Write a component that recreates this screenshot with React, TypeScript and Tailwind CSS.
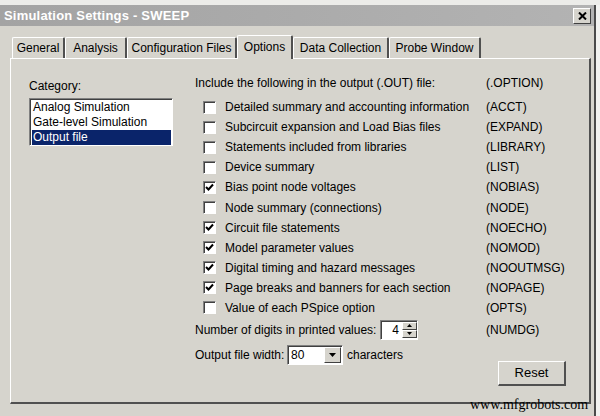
import React from "react";

const options = [
  { label: "Detailed summary and accounting information", code: "(ACCT)", checked: false },
  { label: "Subcircuit expansion and Load Bias files", code: "(EXPAND)", checked: false },
  { label: "Statements included from libraries", code: "(LIBRARY)", checked: false },
  { label: "Device summary", code: "(LIST)", checked: false },
  { label: "Bias point node voltages", code: "(NOBIAS)", checked: true },
  { label: "Node summary (connections)", code: "(NODE)", checked: false },
  { label: "Circuit file statements", code: "(NOECHO)", checked: true },
  { label: "Model parameter values", code: "(NOMOD)", checked: true },
  { label: "Digital timing and hazard messages", code: "(NOOUTMSG)", checked: true },
  { label: "Page breaks and banners for each section", code: "(NOPAGE)", checked: true },
  { label: "Value of each PSpice option", code: "(OPTS)", checked: false },
];

const tabs = [
  { name: "General", w: "w-[53px]" },
  { name: "Analysis", w: "w-[62px]" },
  { name: "Configuration Files", w: "w-[110px]" },
  { name: "Options", w: "w-[56px]", active: true },
  { name: "Data Collection", w: "w-[96px]" },
  { name: "Probe Window", w: "w-[92px]" },
];

function Checkbox({ checked }: { checked: boolean }) {
  return (
    <div className="w-[13px] h-[13px] bg-white border-t border-l border-t-[#808080] border-l-[#808080] border-b border-r border-b-white border-r-white shadow-[inset_1px_1px_0_#404040] flex items-center justify-center">
      {checked && (
        <svg width="9" height="9" viewBox="0 0 9 9">
          <path d="M1 4 L3.5 6.5 L8 1.5" fill="none" stroke="black" strokeWidth="2" />
        </svg>
      )}
    </div>
  );
}

function Sunken({ className, children }: { className?: string; children?: React.ReactNode }) {
  return (
    <div className={"bg-white border-t border-l border-t-[#808080] border-l-[#808080] border-b border-r border-b-white border-r-white shadow-[inset_1px_1px_0_#404040] " + (className ?? "")}>
      {children}
    </div>
  );
}

function Arrow({ up, size = 3 }: { up?: boolean; size?: number }) {
  return (
    <svg width={size * 2 + 1} height={size + 1} viewBox={`0 0 ${size * 2 + 1} ${size + 1}`}>
      {up ? (
        <polygon points={`0,${size + 1} ${size * 2 + 1},${size + 1} ${size + 0.5},0`} fill="black" />
      ) : (
        <polygon points={`0,0 ${size * 2 + 1},0 ${size + 0.5},${size + 1}`} fill="black" />
      )}
    </svg>
  );
}

export default function App() {
  return (
    <div
      className="w-[600px] h-[416px] bg-[#ecece9] overflow-hidden relative text-[12px] text-black"
      style={{ fontFamily: '"Liberation Sans", Arial, sans-serif' }}
    >
      <div className="h-[5px]" />
      <div className="flex h-[411px]">
        <div className="flex-1 flex flex-col bg-[#d6d4cd]">
          {/* title bar */}
          <div className="h-[21px] bg-gradient-to-r from-[#a3a3a3] to-[#b3b3b3] flex items-center justify-between pl-[4px] pr-[3px]">
            <span className="text-white font-bold text-[13px] tracking-[0.2px]">Simulation Settings - SWEEP</span>
            <div className="w-[18px] h-[16px] bg-[#d6d4cd] border-t border-l border-white border-b border-r border-b-[#404040] border-r-[#404040] flex items-center justify-center">
              <svg width="9" height="8" viewBox="0 0 9 8">
                <path d="M1 0.5 L8 7.5 M8 0.5 L1 7.5" stroke="black" strokeWidth="2" />
              </svg>
            </div>
          </div>

          {/* tabs */}
          <div className="flex items-end h-[32px] pl-[12px]">
            {tabs.map((t) =>
              t.active ? (
                <div
                  key={t.name}
                  className={`${t.w} h-[24px] -mb-[1px] relative z-10 bg-[#d6d4cd] border-t border-l border-white border-r-2 border-r-[#505050] rounded-t-[2px] flex items-start justify-center pt-[2px]`}
                >
                  {t.name}
                </div>
              ) : (
                <div
                  key={t.name}
                  className={`${t.w} h-[21px] border-t border-l border-white border-r-2 border-r-[#505050] rounded-t-[2px] flex items-center justify-center`}
                >
                  {t.name}
                </div>
              )
            )}
          </div>

          {/* panel */}
          <div className="ml-[10px] mr-[3px] h-[346px] border-t border-l border-white border-r-2 border-b-2 border-r-[#505050] border-b-[#505050] flex pt-[17px]">
            <div className="ml-[18px] w-[144px] flex flex-col">
              <div className="h-[15px] leading-[15px] mt-[3px]">Category:</div>
              <Sunken className="mt-[4px] h-[48px] pl-[2px] pt-[1px]">
                <div className="h-[15px] leading-[15px] pl-[1px]">Analog Simulation</div>
                <div className="h-[15px] leading-[15px] pl-[1px]">Gate-level Simulation</div>
                <div className="h-[15px] leading-[15px] pl-[1px] bg-[#0a246a] text-white mr-[1px]">Output file</div>
              </Sunken>
            </div>

            <div className="ml-[22px] flex flex-col">
              <div className="flex h-[15px] leading-[15px]">
                <div className="w-[291px]">Include the following in the output (.OUT) file:</div>
                <div>(.OPTION)</div>
              </div>
              <div className="flex flex-col mt-[6px]">
                {options.map((o) => (
                  <div key={o.code} className="flex items-center h-[20.1px]">
                    <div className="w-[291px] flex items-center pl-[8px] gap-[9px]">
                      <Checkbox checked={o.checked} />
                      <span>{o.label}</span>
                    </div>
                    <span>{o.code}</span>
                  </div>
                ))}
              </div>

              <div className="flex items-center h-[21px] mt-[1px]">
                <div className="w-[291px] flex items-center">
                  <span className="w-[185px]">Number of digits in printed values:</span>
                  <Sunken className="w-[38px] h-[20px] flex items-center">
                    <span className="flex-1 text-right pr-[3px]">4</span>
                    <div className="w-[15px] h-[16px] flex flex-col">
                      <div className="flex-1 bg-[#d6d4cd] border-t border-l border-white border-b border-r border-b-[#404040] border-r-[#404040] flex items-center justify-center">
                        <Arrow up size={2} />
                      </div>
                      <div className="flex-1 bg-[#d6d4cd] border-t border-l border-white border-b border-r border-b-[#404040] border-r-[#404040] flex items-center justify-center">
                        <Arrow size={2} />
                      </div>
                    </div>
                  </Sunken>
                </div>
                <span>(NUMDG)</span>
              </div>

              <div className="flex items-center h-[21px] mt-[4px]">
                <span className="w-[92px]">Output file width:</span>
                <Sunken className="w-[56px] h-[20px] flex items-center">
                  <span className="flex-1 pl-[3px]">80</span>
                  <div className="w-[17px] h-[16px] mr-[1px] bg-[#d6d4cd] border-t border-l border-white border-b border-r border-b-[#404040] border-r-[#404040] flex items-center justify-center">
                    <Arrow size={3} />
                  </div>
                </Sunken>
                <span className="ml-[4px]">characters</span>
              </div>

              <div className="flex justify-end -mt-[4px] w-[371px]">
                <div className="w-[68px] h-[25px] bg-[#d6d4cd] border-t border-l border-white border-b-2 border-r-2 border-b-[#505050] border-r-[#505050] flex items-center justify-center text-[13px]">
                  Reset
                </div>
              </div>
            </div>
          </div>
        </div>
        <div className="w-[2px] bg-[#4a4a4a]" />
        <div className="w-[4px] bg-[#f2f2f0]" />
      </div>

      <div
        className="absolute left-[470px] top-[397px] text-[14px] leading-[16px] text-black"
        style={{ fontFamily: '"Liberation Serif", "Times New Roman", serif' }}
      >
        www.mfgrobots.com
      </div>
    </div>
  );
}
